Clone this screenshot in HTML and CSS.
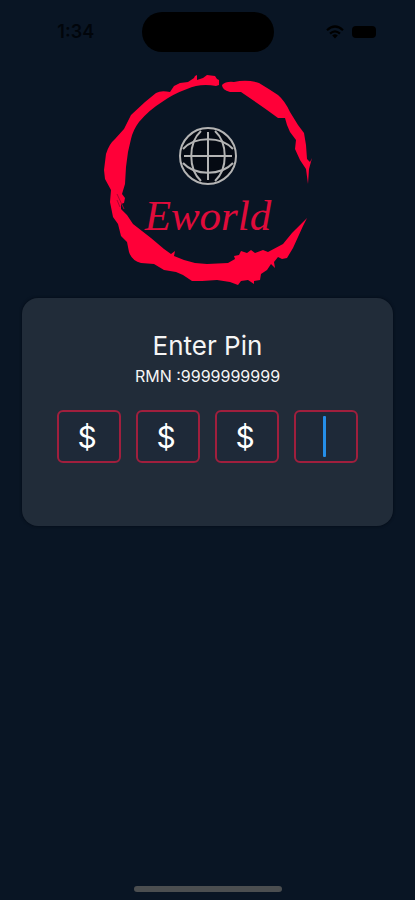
FILE: index.html
```html
<!DOCTYPE html>
<html lang="en">
<head>
<meta charset="utf-8">
<meta name="viewport" content="width=device-width, initial-scale=1">
<title>Eworld – Enter Pin</title>
<link rel="stylesheet" href="styles.css">
</head>
<body>
<div class="screen">
  <header class="status">
    <span class="time">1:34</span>
    <span class="island"></span>
    <span class="indicators">
      <svg class="wifi" viewBox="0 0 18 14" aria-hidden="true">
        <g fill="none" stroke="currentColor" stroke-width="2.2">
          <path d="M1 5.2Q9-2.2 17 5.2"/>
          <path d="M4 8.6Q9 4 14 8.6"/>
        </g>
        <path d="M6.2 10.5Q9 8.2 11.8 10.5L9 13.5Z" fill="currentColor"/>
      </svg>
      <span class="battery"></span>
    </span>
  </header>

  <main class="content">
    <svg class="logo" viewBox="0 0 208 216" role="img" aria-label="Eworld">
      <g class="brush">
        <path d="M111 4L113 7L115 8V13L112 14Q96 11 83 17Q69 22 58 30Q45 38 35 50Q29 58 27 67L24 80L22 95L21 112L18 122L21 126L20 131L17 132L17 137L23 143L29 152L47 166L60 177L67 182L71 179L70 184L80 188L91 191L103 192L124 191L131 187L130 184L135 183L137 179L143 181L147 178L151 181L159 178L164 180L179 172L188 161L192 157L203 146L199 154L189 176L183 186L178 187L174 185L170 190L171 196L167 192L163 198L157 202L156 208L150 209V212L144 208L137 209L134 213L126 210L113 208L98 209L88 209L79 203L72 200L60 198L50 192L37 191Q28 189 25 180L23 170L17 164L14 152L9 145L6 130L7 118L1 107L0 98L2 82Q5 72 11 67L20 57L27 43L41 30L52 21Q57 18 66 20L70 14L76 11L84 10L90 6L91 4L93 3V8L99 6L103 3Z"/>
        <path d="M118 13Q122 9 130 10Q143 7 155 11Q165 17 174 23Q181 29 186 40L194 53L200 61L202 73L203 87L206 90L208 86L205 97L204 112L202 97L196 88L191 77L192 68L186 60L183 53L181 46L174 46L163 38L153 31L137 20L126 20Q118 18 118 13Z"/>
      </g>
      <path class="scratch" d="M13 122L20 137M13 128L16 135"/>
      <g class="globe">
        <circle class="disc" cx="104" cy="84" r="28"/>
        <path d="M104 60V108M80 84H128"/>
        <path d="M97 59C84 71 84 97 97 109M111 59C124 71 124 97 111 109"/>
        <path d="M79 77C91 64 117 64 129 77M79 91C91 104 117 104 129 91"/>
      </g>
      <text class="wordmark" x="104" y="158">Eworld</text>
    </svg>

    <form class="card">
      <h1 class="title">Enter Pin</h1>
      <p class="number">RMN :9999999999</p>
      <div class="pins">
        <input class="pin" type="text" maxlength="1" value="$" aria-label="Pin digit 1">
        <input class="pin" type="text" maxlength="1" value="$" aria-label="Pin digit 2">
        <input class="pin" type="text" maxlength="1" value="$" aria-label="Pin digit 3">
        <div class="current">
          <input class="pin" type="text" maxlength="1" aria-label="Pin digit 4">
          <span class="caret"></span>
        </div>
      </div>
    </form>
  </main>
  <div class="home"></div>
</div>
</body>
</html>
```
FILE: styles.css
```css
* {
  box-sizing: border-box;
}

body {
  margin: 0;
  background: #091524;
  color: #f5f5f5;
  font-family: Inter, "Liberation Sans", sans-serif;
}

.screen {
  min-height: 100vh;
  display: flex;
  flex-direction: column;
  padding-bottom: 8px;
}

.status {
  display: grid;
  grid-template-columns: 1fr 132px 1fr;
  align-items: center;
  padding-top: 12px;
  color: #000;
}

.time {
  justify-self: center;
  padding-left: 10px;
  font-size: 18px;
  line-height: 24px;
  font-weight: 600;
  color: #01050b;
}

.island {
  height: 40px;
  border-radius: 20px;
  background: #000;
}

.indicators {
  display: flex;
  align-items: center;
  justify-content: center;
  gap: 8px;
  padding-left: 14px;
}

.wifi {
  width: 18px;
  height: 14px;
}

.battery {
  width: 24px;
  height: 12px;
  border-radius: 4px;
  background: #000;
}

.content {
  flex: 1;
  display: flex;
  flex-direction: column;
  align-items: center;
  padding: 20px 22px;
}

.logo {
  width: 208px;
  height: 216px;
}

.brush {
  fill: #ff0038;
}

.scratch {
  fill: none;
  stroke: #a90530;
  stroke-width: 1;
}

.globe {
  fill: none;
  stroke: #b4b4b4;
  stroke-width: 2;
}

.disc {
  fill: #050a13;
}

.wordmark {
  fill: #e00b3b;
  font-family: "Liberation Serif", serif;
  font-size: 43px;
  font-style: italic;
  text-anchor: middle;
}

.card {
  width: 100%;
  margin-top: 10px;
  padding: 32px 35px 63px;
  border-radius: 16px;
  background: #212c39;
  box-shadow: 0 0 3px #030a14;
  text-align: center;
}

.title {
  margin: 0;
  font-size: 26px;
  line-height: 32px;
  font-weight: 400;
}

.number {
  margin: 4px 0 24px;
  font-size: 16px;
  line-height: 20px;
}

.pins {
  display: grid;
  grid-template-columns: repeat(4, 1fr);
  gap: 15px;
}

.pin {
  display: block;
  width: 100%;
  height: 53px;
  padding: 0 4px 0 0;
  border: 2px solid #a01f3d;
  border-radius: 6px;
  outline: 0;
  background: #1e2938;
  color: #fff;
  font-family: inherit;
  font-size: 30px;
  text-align: center;
}

.current {
  position: relative;
}

.caret {
  position: absolute;
  top: 6px;
  bottom: 6px;
  left: 29px;
  width: 3px;
  border-radius: 1px;
  background: #258ee8;
}

.home {
  align-self: center;
  width: 148px;
  height: 6px;
  border-radius: 3px;
  background: #4b4e50;
}
```
